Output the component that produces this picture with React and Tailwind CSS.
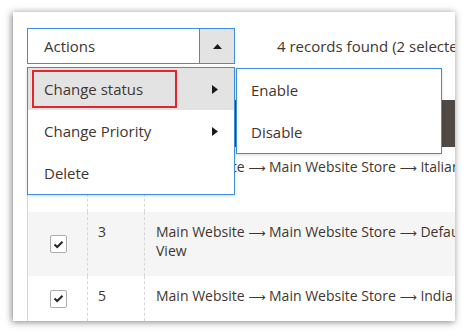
import React from 'react';

function Checkbox() {
  return (
    <div className="w-[17px] h-[18px] bg-white border border-[#adadad] rounded-[2px] flex items-center justify-center">
      <svg width="11" height="9" viewBox="0 0 11 9">
        <path d="M1.5 4.5 L4.2 7 L9.5 1.8" fill="none" stroke="#262626" strokeWidth="2" />
      </svg>
    </div>
  );
}

function ArrowRight() {
  return (
    <svg width="6" height="9" viewBox="0 0 6 9" className="absolute right-[16px]">
      <path d="M0 0 L6 4.5 L0 9 Z" fill="#1a1a1a" />
    </svg>
  );
}

function Path({ parts }) {
  return (
    <>
      {parts.map((p, i) => (
        <React.Fragment key={i}>
          {i > 0 && (
            <>
              {' '}
              <span className="font-['DejaVu_Sans',sans-serif] text-[12px]">⟶</span>{' '}
            </>
          )}
          {p}
        </React.Fragment>
      ))}
    </>
  );
}

const rows = [
  { id: '', parts: ['Main Website', 'Main Website Store', 'Italian Store'], extra: 'View', h: 'h-[65px]', bg: 'bg-white' },
  { id: '3', parts: ['Main Website', 'Main Website Store', 'Default Store'], extra: 'View', h: 'h-[64px]', bg: 'bg-[#f5f5f5]' },
  { id: '5', parts: ['Main Website', 'Main Website Store', 'India Store View'], extra: '', h: 'h-[45px]', bg: 'bg-white' },
];

export default function App() {
  return (
    <div className="w-[469px] h-[334px] bg-white pt-[12px] pl-[13px] font-['Open_Sans',sans-serif] text-[#41362f]">
      <div className="relative w-[442px] h-[309px] bg-white overflow-hidden shadow-[-1px_1px_7px_rgba(0,0,0,0.5)]">
        {/* Toolbar */}
        <div className="flex items-center pt-[16px] pl-[14px]">
          <div className="flex shrink-0 w-[208px] h-[36px] border border-[#3d8fdc]">
            <div className="flex-1 flex items-center pl-[16px] text-[15px]">Actions</div>
            <div className="w-[35px] bg-[#e3e3e3] border-l border-[#3d8fdc] flex items-center justify-center">
              <svg width="9" height="5" viewBox="0 0 9 5">
                <path d="M0 5 L4.5 0 L9 5 Z" fill="#1a1a1a" />
              </svg>
            </div>
          </div>
          <span className="ml-[42px] shrink-0 text-[15px] whitespace-nowrap">4 records found (2 selected)</span>
        </div>

        {/* Grid */}
        <div className="mt-[36px] ml-[14px] w-[600px] border-l border-[#d6d6d6]">
          <div className="h-[47px] bg-[#514943]" />
          {rows.map((r, i) => (
            <div key={i} className={`grid grid-cols-[60px_57px_1fr] ${r.h} ${r.bg}`}>
              <div className="flex items-center justify-center pl-[1px] border-r border-dashed border-[#d6d6d6]">
                {r.id && <Checkbox />}
              </div>
              <div className="pl-[10px] pt-[11px] text-[14px] leading-[18px] border-r border-dashed border-[#d6d6d6]">{r.id}</div>
              <div className="pl-[11px] pt-[11px] text-[14px] leading-[18px] whitespace-nowrap">
                <div><Path parts={r.parts} /></div>
                {r.extra && <div>{r.extra}</div>}
              </div>
            </div>
          ))}
        </div>

        {/* Actions menu */}
        <div className="absolute left-[14px] top-[55px] w-[208px] bg-white border border-[#3d8fdc] shadow-[0_1px_3px_rgba(0,0,0,0.15)] z-10 text-[15px]">
          <div className="relative h-[42px] bg-[#e3e3e3] flex items-center pl-[16px]">
            <div className="absolute left-[4px] top-[2px] w-[145px] h-[38px] border-2 border-[#e3262e]" />
            <span className="relative">Change status</span>
            <ArrowRight />
          </div>
          <div className="relative h-[42px] flex items-center pl-[16px]">
            Change Priority
            <ArrowRight />
          </div>
          <div className="h-[42px] flex items-center pl-[16px]">Delete</div>
        </div>

        {/* Status submenu */}
        <div className="absolute left-[223px] top-[56px] w-[206px] bg-white border border-[#3d8fdc] shadow-[0_1px_3px_rgba(0,0,0,0.15)] z-10 text-[15px]">
          <div className="h-[42px] flex items-center pl-[14px]">Enable</div>
          <div className="h-[42px] flex items-center pl-[14px]">Disable</div>
        </div>
      </div>
    </div>
  );
}
